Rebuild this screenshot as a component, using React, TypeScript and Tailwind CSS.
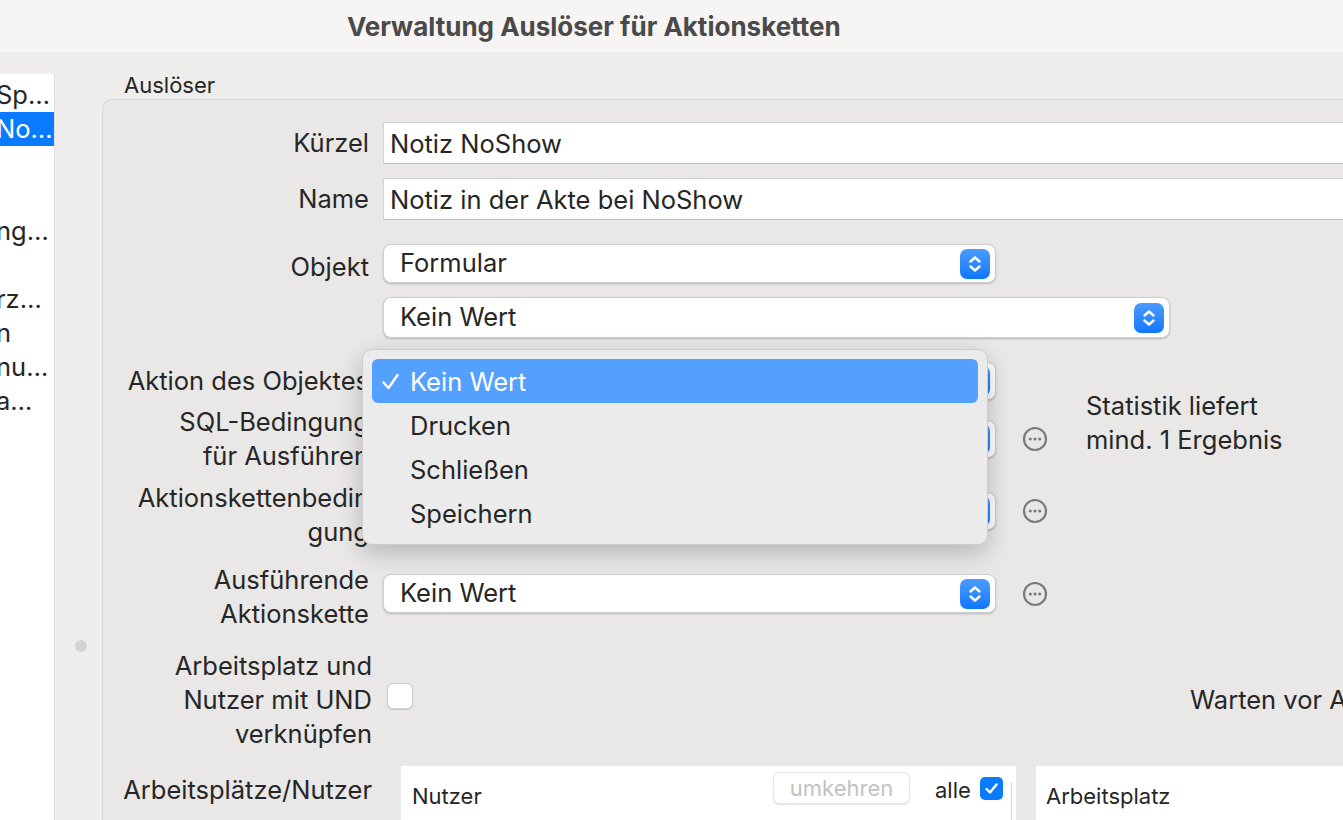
import type { ReactNode } from 'react';

const FONT = { fontFamily: 'Inter, "Noto Sans", "Liberation Sans", sans-serif' };

const listRows = ['Sp…', 'No…', '', '', 'ng…', '', 'rz…', 'n', 'nu…', 'a…'];

function Stepper() {
    return (
        <div className="flex h-[30px] w-[30px] items-center justify-center rounded-[7px] bg-gradient-to-b from-[#4a9bff] to-[#0a77ff]">
            <svg width="30" height="30" viewBox="0 0 30 30" fill="none">
                <path d="M10.5 12.5 L15 8.5 L19.5 12.5" stroke="white" strokeWidth="2.4" strokeLinecap="round" strokeLinejoin="round" />
                <path d="M10.5 17.5 L15 21.5 L19.5 17.5" stroke="white" strokeWidth="2.4" strokeLinecap="round" strokeLinejoin="round" />
            </svg>
        </div>
    );
}

function PopUp({ value, width, height = 39 }: { value: string; width: number; height?: number }) {
    return (
        <div
            className="flex shrink-0 items-center justify-between rounded-[8px] border-[0.5px] border-[#cfcfcf] bg-white pl-[16px] pr-[5px] shadow-[0_1px_2px_rgba(0,0,0,0.22)]"
            style={{ width, height }}
        >
            <span className="text-[25.5px] text-[#262626]">{value}</span>
            <Stepper />
        </div>
    );
}

function MoreButton() {
    return (
        <svg width="26" height="26" viewBox="0 0 26 26" fill="none" className="shrink-0">
            <circle cx="13" cy="13" r="11" stroke="#7a7a7a" strokeWidth="2.2" />
            <circle cx="8.3" cy="13" r="1.6" fill="#7a7a7a" />
            <circle cx="13" cy="13" r="1.6" fill="#7a7a7a" />
            <circle cx="17.7" cy="13" r="1.6" fill="#7a7a7a" />
        </svg>
    );
}

function Row({ label, height, className = '', children }: { label: ReactNode; height: number; className?: string; children?: ReactNode }) {
    return (
        <div className={`flex items-center ${className}`} style={{ height }}>
            <div className="w-[266px] shrink-0 whitespace-nowrap text-right text-[25.5px] leading-[34px] text-[#262626]">{label}</div>
            {children}
        </div>
    );
}

function TextField({ value }: { value: string }) {
    return (
        <div className="ml-[14px] flex h-[42px] w-[1100px] items-center border border-[#d2d2d2] border-b-[#bdbdbd] bg-white pl-[6px] pt-[3px] text-[25.5px] text-[#262626]">
            {value}
        </div>
    );
}

export default function App() {
    return (
        <div className="relative h-[820px] w-[1343px] overflow-hidden bg-[#efeeec] text-[#262626]" style={FONT}>
            <div className="flex h-[52px] items-center bg-[#f6f5f3] pl-[347px] text-[26px] font-bold text-[#4a4a4a]">
                Verwaltung Auslöser für Aktionsketten
            </div>

            <div className="flex h-[768px]">
                <div className="mt-[22px] w-[55px] shrink-0 overflow-hidden border-r border-[#dedede] bg-white pt-[4px]">
                    {listRows.map((text, i) => (
                        <div
                            key={i}
                            className={`flex h-[34px] items-center whitespace-nowrap text-[25.5px] ${i === 1 ? 'bg-[#0a7aff] text-white' : 'text-[#262626]'}`}
                        >
                            <span className="-ml-[4px]">{text}</span>
                        </div>
                    ))}
                </div>

                <div className="w-[47px] shrink-0 pl-[20px] pt-[588px]">
                    <div className="h-[12px] w-[12px] rounded-full bg-[#d4d3d1]" />
                </div>

                <div className="min-w-0 flex-1">
                    <div className="ml-[22px] mt-[21px] text-[22px] leading-[24px] text-[#262626]">Auslöser</div>
                    <div className="mt-[2px] h-[800px] w-[1400px] rounded-tl-[10px] border-l border-t border-[#dad9d7] bg-[#e9e8e6] pt-[22px]">
                        <Row label="Kürzel" height={42}>
                            <TextField value="Notiz NoShow" />
                        </Row>
                        <Row label="Name" height={42} className="mt-[14px]">
                            <TextField value="Notiz in der Akte bei NoShow" />
                        </Row>
                        <Row label={<span className="relative top-[3px]">Objekt</span>} height={39} className="mt-[24px]">
                            <div className="ml-[14px]"><PopUp value="Formular" width={613} /></div>
                        </Row>
                        <Row label="" height={41} className="mt-[14px]">
                            <div className="ml-[14px]"><PopUp value="Kein Wert" width={787} height={41} /></div>
                        </Row>
                        <Row label="Aktion des Objektes" height={38} className="mt-[24px]">
                            <div className="ml-[14px]"><PopUp value="Kein Wert" width={613} height={38} /></div>
                        </Row>
                        <Row label={<>SQL-Bedingung<br />für Ausführen</>} height={68} className="mt-[5px]">
                            <div className="ml-[14px]"><PopUp value="Kein Wert" width={613} height={38} /></div>
                            <div className="ml-[26px]"><MoreButton /></div>
                            <div className="mb-[32px] ml-[38px] whitespace-nowrap text-[25.5px] leading-[34px]">
                                Statistik liefert<br />mind. 1 Ergebnis
                            </div>
                        </Row>
                        <Row label={<>Aktionskettenbedin<br />gung</>} height={68} className="mt-[8px]">
                            <div className="mb-[8px] ml-[14px]"><PopUp value="Kein Wert" width={613} height={38} /></div>
                            <div className="mb-[8px] ml-[26px]"><MoreButton /></div>
                        </Row>
                        <Row label={<>Ausführende<br />Aktionskette</>} height={68} className="mt-[14px]">
                            <div className="mb-[7px] ml-[14px]"><PopUp value="Kein Wert" width={613} height={39} /></div>
                            <div className="mb-[7px] ml-[26px]"><MoreButton /></div>
                        </Row>
                        <Row label={<span className="relative left-[3px]">Arbeitsplatz und<br />Nutzer mit UND<br />verknüpfen</span>} height={102} className="mt-[18px]">
                            <div className="mb-[8px] ml-[18px] h-[26px] w-[26px] shrink-0 rounded-[6px] border border-[#cfcfcf] bg-white shadow-[0_0.5px_1px_rgba(0,0,0,0.15)]" />
                            <div className="ml-[777px] whitespace-nowrap text-[25.5px]">Warten vor Ausführung</div>
                        </Row>
                        <div className="mt-[15px] flex items-start">
                            <div className="mt-[9px] w-[269px] shrink-0 whitespace-nowrap text-right text-[25.5px] leading-[30px]">Arbeitsplätze/Nutzer</div>
                            <div className="ml-[29px] flex h-[80px] w-[615px] shrink-0 items-start bg-white">
                                <div className="ml-[11px] mt-[17px] w-[361px] text-[22px] leading-[26px]">Nutzer</div>
                                <div className="mt-[6px] flex h-[32px] w-[137px] items-center justify-center rounded-[6px] border border-[#e6e6e6] bg-white text-[22px] text-[#c2c2c2] shadow-[0_0.5px_1px_rgba(0,0,0,0.12)]">
                                    umkehren
                                </div>
                                <div className="ml-[25px] mt-[11px] text-[22px] leading-[26px]">alle</div>
                                <div className="ml-[9px] mt-[11px] flex h-[23px] w-[23px] items-center justify-center rounded-[5px] bg-[#0a7aff]">
                                    <svg width="17" height="17" viewBox="0 0 17 17" fill="none">
                                        <path d="M3.5 9 L7 12.5 L13.5 4.5" stroke="white" strokeWidth="2.4" strokeLinecap="round" strokeLinejoin="round" />
                                    </svg>
                                </div>
                                <div className="ml-[8px] mt-[16px] h-[40px] w-px bg-[#d6d6d6]" />
                            </div>
                            <div className="ml-[20px] flex h-[80px] w-[400px] shrink-0 bg-white">
                                <div className="ml-[10px] mt-[17px] text-[22px] leading-[26px]">Arbeitsplatz</div>
                            </div>
                        </div>
                    </div>
                </div>
            </div>

            <div className="absolute left-[362px] top-[349px] h-[196px] w-[626px] rounded-[10px] border border-[#cdcdcd] bg-[#ebebeb] p-[9px] shadow-[0_8px_24px_rgba(0,0,0,0.22)]">
                <div className="flex h-[44px] items-center rounded-[6px] bg-[#54a0ff] pt-[2px] text-[25.5px] text-white">
                    <svg width="22" height="22" viewBox="0 0 22 22" fill="none" className="ml-[8px]">
                        <path d="M3.5 11.5 L8.5 17 L17.5 4" stroke="white" strokeWidth="2.4" strokeLinecap="round" strokeLinejoin="round" />
                    </svg>
                    <span className="ml-[8px]">Kein Wert</span>
                </div>
                {['Drucken', 'Schließen', 'Speichern'].map((item) => (
                    <div key={item} className="flex h-[44px] items-center pl-[38px] pt-[3px] text-[25.5px] text-[#262626]">
                        {item}
                    </div>
                ))}
            </div>
        </div>
    );
}
